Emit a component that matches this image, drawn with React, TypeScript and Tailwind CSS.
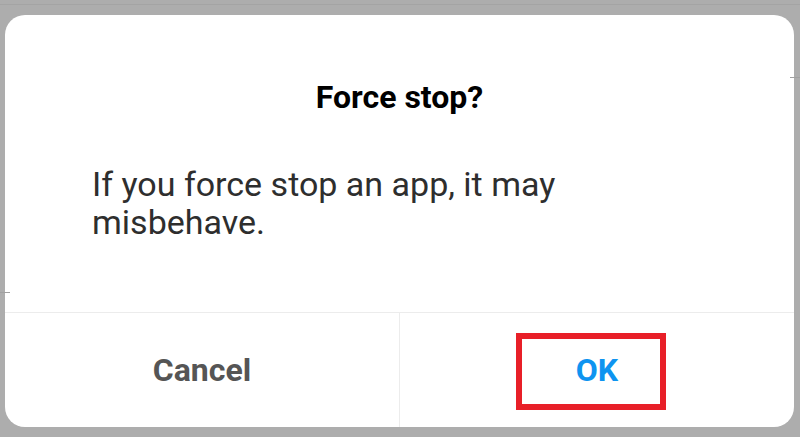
import React from "react";

export default function App() {
  return (
    <div
      className="relative w-[800px] h-[437px] bg-[#adadad] overflow-hidden"
      style={{ fontFamily: "Roboto, 'Liberation Sans', sans-serif" }}
    >
      {/* faint underlying page lines */}
      <div className="absolute left-0 right-0 top-[4px] h-px bg-[#a4a4a4]" />
      <div className="absolute right-0 top-[77px] w-[10px] h-px bg-[#a0a0a0]" />
      <div className="absolute left-0 top-[292px] w-[10px] h-px bg-[#a0a0a0]" />

      <div className="pt-[15px] pl-[5px]">
        <div className="w-[789px] h-[412px] bg-white rounded-[20px] flex flex-col">
          <div className="flex-1 flex flex-col">
            <h1 className="pt-[63px] text-center text-[32px] leading-[38px] font-bold text-black">
              Force stop?
            </h1>
            <p className="mt-[49px] pl-[87px] w-[620px] text-[34px] leading-[38px] text-[#2e2e2e]">
              If you force stop an app, it may misbehave.
            </p>
          </div>
          <div className="h-[115px] border-t border-[#ececec] flex">
            <div className="flex-1 flex items-center justify-center border-r border-[#ececec]">
              <span className="text-[32px] font-bold text-[#555555]">Cancel</span>
            </div>
            <div className="relative flex-1 flex items-center justify-center">
              <span className="text-[32px] font-bold text-[#0e94f0]">OK</span>
              <div className="absolute left-[116px] top-[20px] w-[150px] h-[77px] border-[6px] border-[#e81f28]" />
            </div>
          </div>
        </div>
      </div>
    </div>
  );
}
